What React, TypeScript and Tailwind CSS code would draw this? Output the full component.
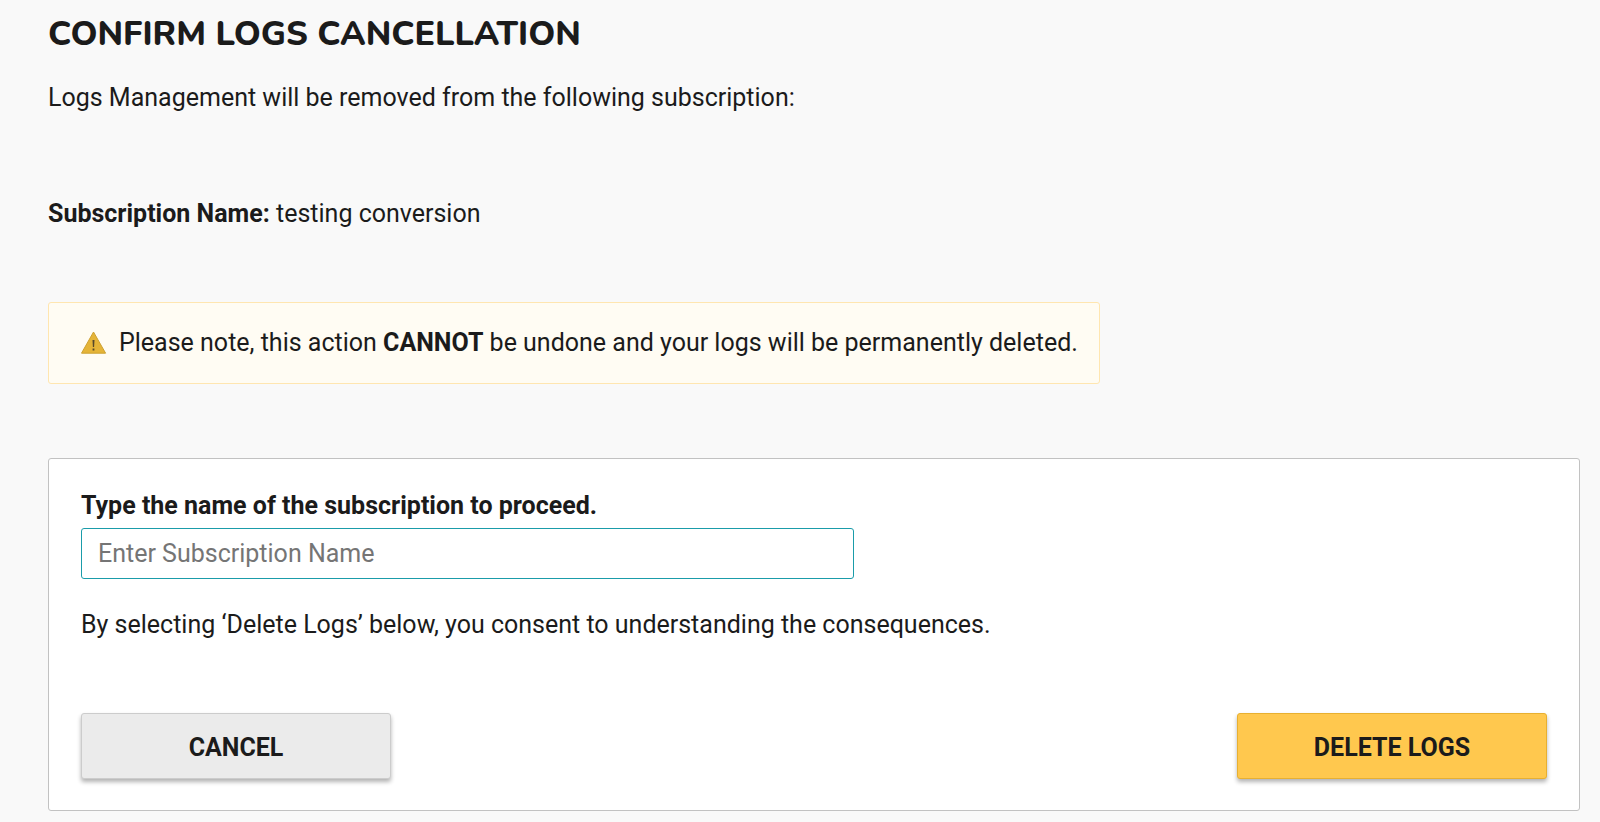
import React from "react";

export default function App() {
  return (
    <main className="min-h-screen bg-[#f9f9f9] pt-[13px] pr-5 pb-2 pl-12 font-[Roboto,sans-serif] text-[25px] leading-8 text-[#1b1b1b]">
      <h1 className="font-[Nunito,'Open_Sans',sans-serif] text-[34px] leading-[42px] font-extrabold">CONFIRM LOGS CANCELLATION</h1>
      <p className="mt-[27px]">Logs Management will be removed from the following subscription:</p>
      <p className="mt-[84px]"><strong className="font-bold">Subscription Name:</strong> testing conversion</p>
      <div role="alert" className="mt-[72px] flex min-h-[82px] w-fit items-center gap-3 rounded-[3px] border border-[#ffe6b0] bg-[#fffcf3] pr-[21px] pl-8">
        <svg className="h-6 w-[26px] shrink-0" viewBox="0 0 26 24" aria-hidden="true">
          <path d="M12.5 1 24.6 22.2H.5Z" fill="#e5b437" stroke="#cda02f" strokeWidth="1" strokeLinejoin="round" />
          <path d="M11.5 9h2l-.4 7h-1.2zM11.6 17.6h1.8v2h-1.8z" fill="#57482a" />
        </svg>
        <p>Please note, this action <strong className="font-bold">CANNOT</strong> be undone and your logs will be permanently deleted.</p>
      </div>
      <form className="mt-[74px] rounded-[3px] border border-[#c2c2c2] bg-white px-8 pt-[31px] pb-[31px]" onSubmit={(e) => e.preventDefault()}>
        <label htmlFor="name" className="block font-bold">Type the name of the subscription to proceed.</label>
        <input id="name" type="text" placeholder="Enter Subscription Name" className="mt-[6px] block h-[51px] w-[773px] max-w-full rounded-[3px] border border-[#1a9caa] bg-white px-4 outline-none placeholder:text-[#757575]" />
        <p className="mt-[30px]">By selecting ‘Delete Logs’ below, you consent to understanding the consequences.</p>
        <div className="mt-[72px] flex justify-between">
          <button type="button" className="h-[66px] w-[310px] rounded-[3px] border border-[#cccccc] bg-[#ebebeb] pt-1 font-bold shadow-[0_3px_4px_rgba(0,0,0,0.3)]">CANCEL</button>
          <button type="submit" className="h-[66px] w-[310px] rounded-[3px] border border-[#e8b030] bg-[#ffc84e] pt-1 font-bold shadow-[0_3px_4px_rgba(0,0,0,0.3)]">DELETE LOGS</button>
        </div>
      </form>
    </main>
  );
}
